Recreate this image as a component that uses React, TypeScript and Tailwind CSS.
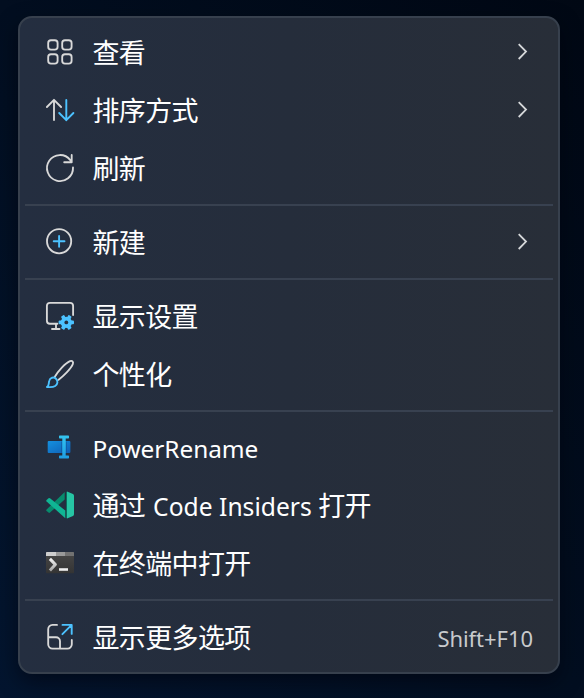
import type { ReactNode } from "react";

const line = { fill: "none", stroke: "#d9d9d9", strokeWidth: 1.85 } as const;
const BLUE = "#4cc2ff";

function Icon({ children }: { children: ReactNode }) {
  return (
    <svg className="block h-7 w-7 shrink-0 overflow-visible" viewBox="0 0 28 28" aria-hidden="true">
      {children}
    </svg>
  );
}

const ViewIcon = () => (
  <Icon>
    <g {...line}>
      <rect x="2.2" y="2.2" width="9.4" height="9.4" rx="2.8" />
      <rect x="16.2" y="2.2" width="9.4" height="9.4" rx="2.8" />
      <rect x="2.2" y="16.2" width="9.4" height="9.4" rx="2.8" />
      <rect x="16.2" y="16.2" width="9.4" height="9.4" rx="2.8" />
    </g>
  </Icon>
);

const SortIcon = () => (
  <Icon>
    <path {...line} strokeLinecap="round" strokeLinejoin="round" d="M8 24V3.8M.9 11 8 3.8l7.1 7.2" />
    <path fill="none" stroke={BLUE} strokeWidth="1.9" strokeLinecap="round" strokeLinejoin="round" d="M20.3 4v20.2M13.2 17l7.1 7.2 7.1-7.2" />
  </Icon>
);

const RefreshIcon = () => (
  <Icon>
    <path {...line} strokeLinecap="round" strokeLinejoin="round" d="M27 13.5A13 13 0 1 1 24.3 6.1L25.7 8.2M25.7 1v7.2H18.2" />
  </Icon>
);

const NewIcon = () => (
  <Icon>
    <circle {...line} cx="13.1" cy="13.2" r="12.1" />
    <path fill="none" stroke={BLUE} strokeWidth="1.9" strokeLinecap="round" d="M13.1 7.9v10.8M7.7 13.3h10.8" />
  </Icon>
);

const DisplayIcon = () => (
  <Icon>
    <path {...line} strokeLinecap="round" d="M27.1 13V3.8A3 3 0 0 0 24.1 .9H3.9A3 3 0 0 0 .9 3.8V18.7a3 3 0 0 0 3 3h7.5M10 22v4.500M6 27h7.500" />
    <g fill={BLUE} transform="translate(20.300 20.400)">
      <circle r="5.600" />
      <rect x="-7.700" y="-1.900" width="15.400" height="3.800" rx="1" />
      <rect x="-7.700" y="-1.900" width="15.400" height="3.800" rx="1" transform="rotate(60)" />
      <rect x="-7.700" y="-1.900" width="15.400" height="3.800" rx="1" transform="rotate(120)" />
      <circle r="1.900" fill="#252e3e" />
    </g>
  </Icon>
);

const BrushIcon = () => (
  <Icon>
    <path {...line} strokeLinejoin="round" d="M8.5 17.3C12 11.3 19.3 3.1 24 1.2c2.5-.9 3.7.8 2.8 2.9C24.7 9 17 16.5 12 20.2" />
    <path fill="none" stroke={BLUE} strokeWidth="1.9" strokeLinejoin="round" d="M1 27c2.2-.8 1.4-3.1 2.2-6.1.8-3.3 4.5-4.3 6.8-2.2 2.3 2.2 1.7 5.8-.8 7.3C6.7 27.6 3.8 27.3 1 27z" />
  </Icon>
);

const PowerRenameIcon = () => (
  <Icon>
    <defs>
      <linearGradient id="rename-box" x1="0" y1="0" x2="1" y2="1">
        <stop stopColor="#1490df" /><stop offset="1" stopColor="#0f5fb5" />
      </linearGradient>
      <linearGradient id="rename-cursor" x1="0" y1="0" x2="0" y2="1">
        <stop stopColor="#35c4ee" /><stop offset="1" stopColor="#1e9ee4" />
      </linearGradient>
    </defs>
    <g transform="translate(0 .5)">
      <rect x="1.7" y="6.6" width="22.7" height="12" rx="1" fill="url(#rename-box)" />
      <path fill="#124b8f" opacity=".5" d="M15 7h1.3v11.300h-1.300zM20 7h1v11.300h-1z" />
      <path fill="url(#rename-cursor)" d="M13.700 1h8.600q.7 0 .7.800v1.400q0 .8-.7.800h-2.600v17h2.600q.7 0 .7.800v1.400q0 .8-.7.800h-8.600q-.7 0-.7-.8v-1.400q0-.8.7-.8h2.600V4h-2.600q-.7 0-.7-.8V1.800q0-.8.7-.8z" />
    </g>
  </Icon>
);

const CodeInsidersIcon = () => (
  <Icon>
    <g transform="translate(0 .5)">
      <path fill="#078b6d" d="M18.700.5v7.400L4 21.100q-.8.600-1.500 0L.6 19.400q-.7-.8 0-1.500L18.700.5z" />
      <path fill="#10b594" d="M2.500 6.800q.7-.6 1.500 0l15.300 12.300v7.600L.6 10q-.7-.8 0-1.500z" />
      <path fill="#26c5a4" d="M21 0l6 2.600q1 .5 1 1.600v18.600q0 1.200-1 1.600L21 27z" />
      <path fill="#0c715f" d="M20.100.3h.9v26.400h-.9z" />
    </g>
  </Icon>
);

const TerminalIcon = () => (
  <Icon>
    <defs>
      <linearGradient id="terminal-body" x1="0" y1="0" x2="0" y2="1">
        <stop stopColor="#484848" /><stop offset="1" stopColor="#343434" />
      </linearGradient>
      <linearGradient id="terminal-prompt" x1="0" y1="0" x2="0" y2="1">
        <stop stopColor="#f2f2f2" /><stop offset="1" stopColor="#a8a8a8" />
      </linearGradient>
    </defs>
    <rect y="3" width="28" height="21.3" rx=".8" fill="url(#terminal-body)" />
    <path fill="#cecece" d="M.8 3H10v4H0V3.800Q0 3 .8 3z" />
    <path fill="#999" d="M10 3h9v4h-9z" />
    <path fill="#727272" d="M19 3h8.200q.8 0 .8.800V7h-9z" />
    <path fill="none" stroke="url(#terminal-prompt)" strokeWidth="3" strokeLinejoin="round" d="M3.900 9.900l5.500 5.700-5.500 5.900" />
    <path fill="#eee" d="M13 19.200h9v2.600h-9z" />
  </Icon>
);

const MoreIcon = () => (
  <Icon>
    <path {...line} strokeLinecap="round" d="M11 1.900H6.500a4.300 4.300 0 0 0-4.300 4.300v15.100a4.300 4.300 0 0 0 4.300 4.300h15a4.300 4.300 0 0 0 4.300-4.300V17M2.200 14.200H10a4 4 0 0 1 4 4v7.200" />
    <path fill="none" stroke={BLUE} strokeWidth="1.900" strokeLinecap="round" strokeLinejoin="round" d="M16.500 1.900h9.200v9M25.700 1.900l-9.300 9.300" />
  </Icon>
);

const Chevron = () => (
  <svg className="mr-[5px] block h-4 w-[10px] overflow-visible" viewBox="0 0 10 16" aria-hidden="true">
    <path d="M1.700.2l7.300 7.400-7.300 7.400" fill="none" stroke="#d6d8da" strokeWidth="1.800" />
  </svg>
);

function Item({ icon, children, submenu, shortcut, compact }: { icon: ReactNode; children: ReactNode; submenu?: boolean; shortcut?: string; compact?: boolean }) {
  return (
    <div role="menuitem" className={`flex shrink-0 items-center px-[26px] ${compact ? "h-[57px]" : "h-[58px]"}`}>
      {icon}
      <span className="ml-[18.5px] mt-px flex-1 whitespace-pre tracking-[-0.65px]">{children}</span>
      {submenu && <Chevron />}
      {shortcut && <span className="mr-[-1px] mt-px text-[22px] tracking-[-0.05px] text-[#c8cacd]">{shortcut}</span>}
    </div>
  );
}

const Separator = () => <div role="separator" className="mx-[5px] my-[7px] h-[2px] shrink-0 bg-[#384150]" />;

export default function App() {
  return (
    <div className="h-[698px] w-[584px] bg-linear-to-tr from-[#03152f] via-[#020e20] to-[#010814] pl-[18px] pt-4">
      <div
        role="menu"
        className="flex h-[658px] w-[542px] flex-col rounded-[14px] border-2 border-[#37404d] bg-linear-to-r from-[#242e40] via-[#252d3b] to-[#282e38] pt-[5px] font-['Noto_Sans','Noto_Sans_CJK_SC',sans-serif] text-[27px] leading-none text-white shadow-[0_8px_20px_rgba(0,2,10,0.5)]"
      >
        <Item icon={<ViewIcon />} submenu>查看</Item>
        <Item icon={<SortIcon />} submenu>排序方式</Item>
        <Item icon={<RefreshIcon />}>刷新</Item>
        <Separator />
        <Item icon={<NewIcon />} submenu>新建</Item>
        <Separator />
        <Item icon={<DisplayIcon />}>显示设置</Item>
        <Item icon={<BrushIcon />}>个性化</Item>
        <Separator />
        <Item icon={<PowerRenameIcon />} compact><span className="text-[24.4px] tracking-[-0.04px]">PowerRename</span></Item>
        <Item icon={<CodeInsidersIcon />}>通过<span className="pl-[1.5px] text-[24.6px] tracking-[0.02px]"> Code Insiders </span>打开</Item>
        <Item icon={<TerminalIcon />}>在终端中打开</Item>
        <Separator />
        <Item icon={<MoreIcon />} shortcut="Shift+F10">显示更多选项</Item>
      </div>
    </div>
  );
}
